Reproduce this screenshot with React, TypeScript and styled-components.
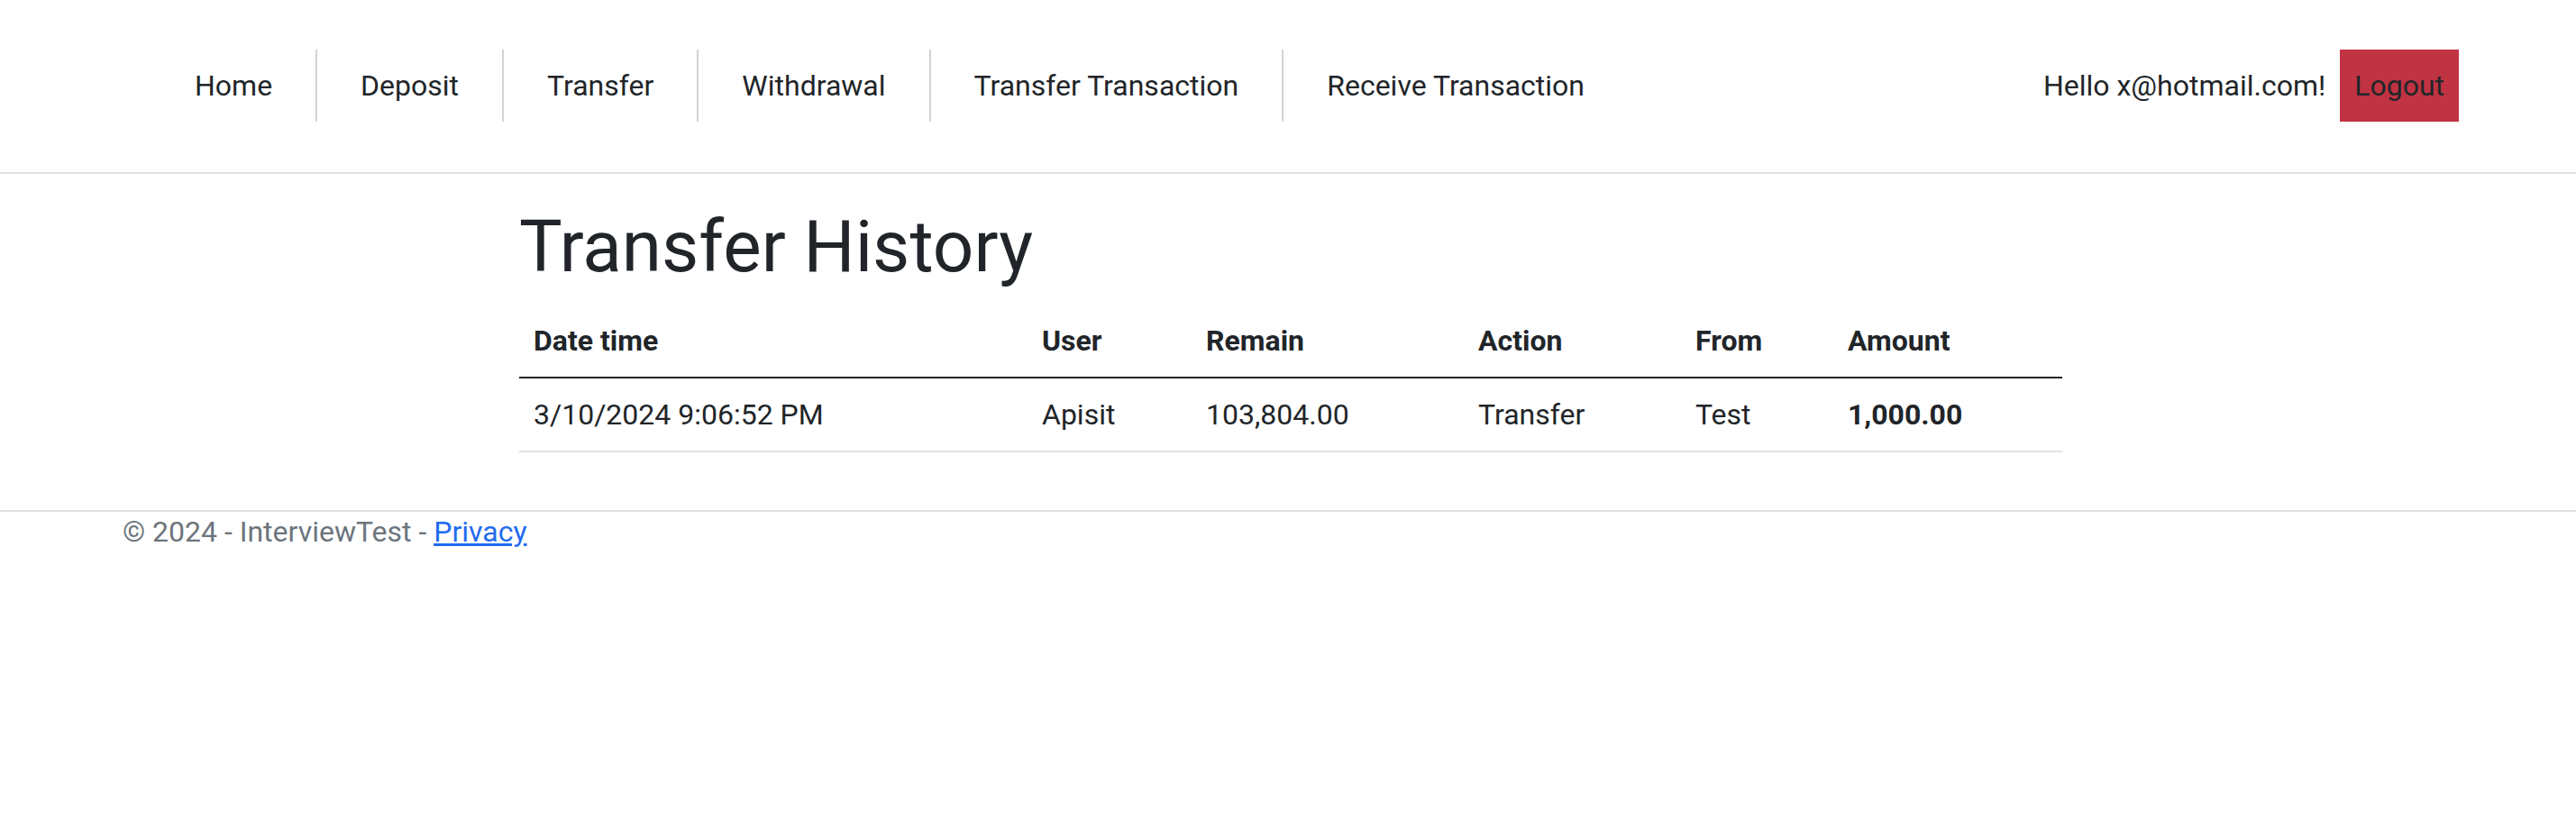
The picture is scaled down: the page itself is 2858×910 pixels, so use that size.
import React from "react";
import styled, { createGlobalStyle } from "styled-components";

const GlobalStyle = createGlobalStyle`
  *, *::before, *::after { box-sizing: border-box; }
  html, body { margin: 0; padding: 0; background: #fff; }
  body {
    font-family: Roboto, "Liberation Sans", Arial, sans-serif;
    font-size: 32px;
    line-height: 1.5;
    color: #212529;
  }
`;

const Header = styled.header`
  border-bottom: 2px solid #dee2e6;
  margin-bottom: 32px;
  background: #fff;
`;

const HeaderInner = styled.nav`
  max-width: 2640px;
  margin: 0 auto;
  padding: 55px 21px 56px 59px;
  display: flex;
  align-items: center;
  justify-content: space-between;
`;

const NavList = styled.ul`
  display: flex;
  list-style: none;
  margin: 0;
  padding: 0;
`;

const NavItem = styled.li`
  display: flex;
  & + & {
    border-left: 2px solid #d4d4d4;
  }
`;

const NavLink = styled.a`
  display: block;
  padding: 16px 48px;
  color: #212529;
  text-decoration: none;
  white-space: nowrap;
`;

const UserArea = styled.div`
  display: flex;
  align-items: center;
`;

const Greeting = styled.span`
  padding: 16px 16px;
  white-space: nowrap;
`;

const LogoutButton = styled.button`
  border: 0;
  margin: 0;
  padding: 16px 16px;
  background: #c13342;
  color: #212529;
  font: inherit;
  line-height: 48px;
  cursor: pointer;
`;

const Main = styled.main`
  width: 1712px;
  margin-left: calc(50% - 853px);
  padding-top: 1px;
  padding-bottom: 32px;
`;

const Title = styled.h1`
  margin: 0 0 16px;
  font-size: 80px;
  font-weight: 400;
  line-height: 1.2;
`;

const Table = styled.table`
  width: 100%;
  border-collapse: collapse;
  table-layout: fixed;
  margin-bottom: 32px;
`;

const HeadCell = styled.th`
  padding: 16px;
  text-align: left;
  font-weight: 700;
  border-bottom: 2px solid #212529;
  white-space: nowrap;
`;

const Cell = styled.td<{ $bold?: boolean }>`
  padding: 16px;
  font-weight: ${(p) => (p.$bold ? 700 : 400)};
  border-bottom: 2px solid #dee2e6;
  white-space: nowrap;
`;

const Footer = styled.footer`
  border-top: 2px solid #dee2e6;
  color: #6c757d;
  white-space: nowrap;
`;

const FooterInner = styled.div`
  max-width: 2640px;
  margin: 0 auto;
  padding: 0 24px 0 27px;
  line-height: 44px;
`;

const FooterLink = styled.a`
  color: #1f6bf0;
  text-decoration: underline;
`;

const navItems = [
  "Home",
  "Deposit",
  "Transfer",
  "Withdrawal",
  "Transfer Transaction",
  "Receive Transaction",
];

const columns = [
  { label: "Date time", width: 564 },
  { label: "User", width: 182 },
  { label: "Remain", width: 302 },
  { label: "Action", width: 241 },
  { label: "From", width: 169 },
  { label: "Amount", width: 254 },
];

const rows = [
  {
    date: "3/10/2024 9:06:52 PM",
    user: "Apisit",
    remain: "103,804.00",
    action: "Transfer",
    from: "Test",
    amount: "1,000.00",
  },
];

export default function App() {
  return (
    <>
      <GlobalStyle />
      <Header>
        <HeaderInner>
          <NavList>
            {navItems.map((item) => (
              <NavItem key={item}>
                <NavLink href="#">{item}</NavLink>
              </NavItem>
            ))}
          </NavList>
          <UserArea>
            <Greeting>Hello x@hotmail.com!</Greeting>
            <LogoutButton type="button">Logout</LogoutButton>
          </UserArea>
        </HeaderInner>
      </Header>
      <Main>
        <Title>Transfer History</Title>
        <Table>
          <colgroup>
            {columns.map((c) => (
              <col key={c.label} style={{ width: c.width }} />
            ))}
          </colgroup>
          <thead>
            <tr>
              {columns.map((c) => (
                <HeadCell key={c.label}>{c.label}</HeadCell>
              ))}
            </tr>
          </thead>
          <tbody>
            {rows.map((r) => (
              <tr key={r.date}>
                <Cell>{r.date}</Cell>
                <Cell>{r.user}</Cell>
                <Cell>{r.remain}</Cell>
                <Cell>{r.action}</Cell>
                <Cell>{r.from}</Cell>
                <Cell $bold>{r.amount}</Cell>
              </tr>
            ))}
          </tbody>
        </Table>
      </Main>
      <Footer>
        <FooterInner>
          © 2024 - InterviewTest - <FooterLink href="#">Privacy</FooterLink>
        </FooterInner>
      </Footer>
    </>
  );
}
